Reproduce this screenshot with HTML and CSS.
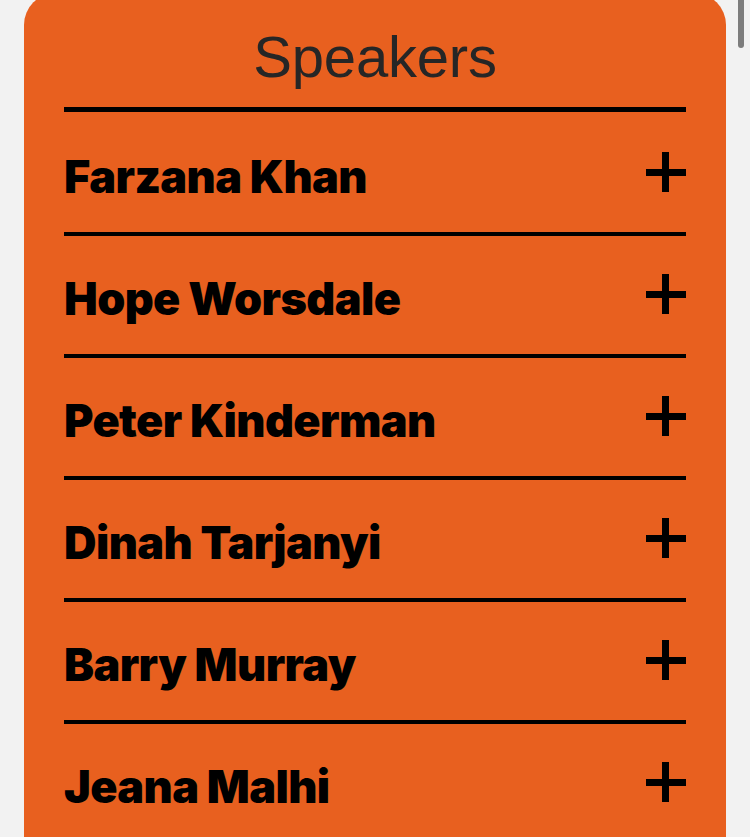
FILE: index.html
```html
<!DOCTYPE html>
<html lang="en">
<head>
<meta charset="utf-8">
<title>Speakers</title>
<link rel="stylesheet" href="styles.css">
</head>
<body>
<section class="card">
  <h1 class="title">Speakers</h1>
  <ul class="list">
    <li class="item"><span class="name">Farzana Khan</span><span class="plus"></span></li>
    <li class="item"><span class="name">Hope Worsdale</span><span class="plus"></span></li>
    <li class="item"><span class="name">Peter Kinderman</span><span class="plus"></span></li>
    <li class="item"><span class="name">Dinah Tarjanyi</span><span class="plus"></span></li>
    <li class="item"><span class="name">Barry Murray</span><span class="plus"></span></li>
    <li class="item"><span class="name">Jeana Malhi</span><span class="plus"></span></li>
  </ul>
</section>
<div class="scrollbar"></div>
</body>
</html>
```
FILE: styles.css
```css
html, body {
  margin: 0;
  padding: 0;
  height: 100%;
  overflow: hidden;
}
body {
  background: #f2f2f2;
}
.card {
  margin: -7px 24px 0;
  background: #e8601f;
  border-radius: 32px 32px 0 0;
  padding: 0 40px;
  min-height: 900px;
}
.title {
  margin: 0;
  padding-top: 35px;
  box-sizing: border-box;
  height: 119px;
  font-family: "Liberation Sans", Arial, sans-serif;
  font-weight: 400;
  font-size: 58px;
  line-height: 58px;
  letter-spacing: -0.2px;
  color: #262626;
  text-align: center;
  border-bottom: 5px solid #000;
}
.list {
  list-style: none;
  margin: 0;
  padding: 2px 0 0;
}
.item {
  height: 118px;
  border-bottom: 4px solid #000;
  display: flex;
  align-items: center;
  justify-content: space-between;
}
.name {
  font-family: Inter, "Liberation Sans", sans-serif;
  font-weight: 900;
  font-size: 45px;
  letter-spacing: -0.6px;
  color: #000;
  line-height: 1;
  padding-top: 6px;
}
.plus {
  position: relative;
  width: 40px;
  height: 40px;
  flex: none;
  margin-top: -2px;
}
.plus::before,
.plus::after {
  content: "";
  position: absolute;
  background: #000;
}
.plus::before {
  left: 0;
  right: 0;
  top: 17px;
  height: 7px;
}
.plus::after {
  top: 0;
  bottom: 0;
  left: 16px;
  width: 7px;
}
.scrollbar {
  position: fixed;
  top: 0;
  right: 6px;
  width: 6px;
  height: 48px;
  border-radius: 0 0 3px 3px;
  background: #7d7d7d;
}
```
